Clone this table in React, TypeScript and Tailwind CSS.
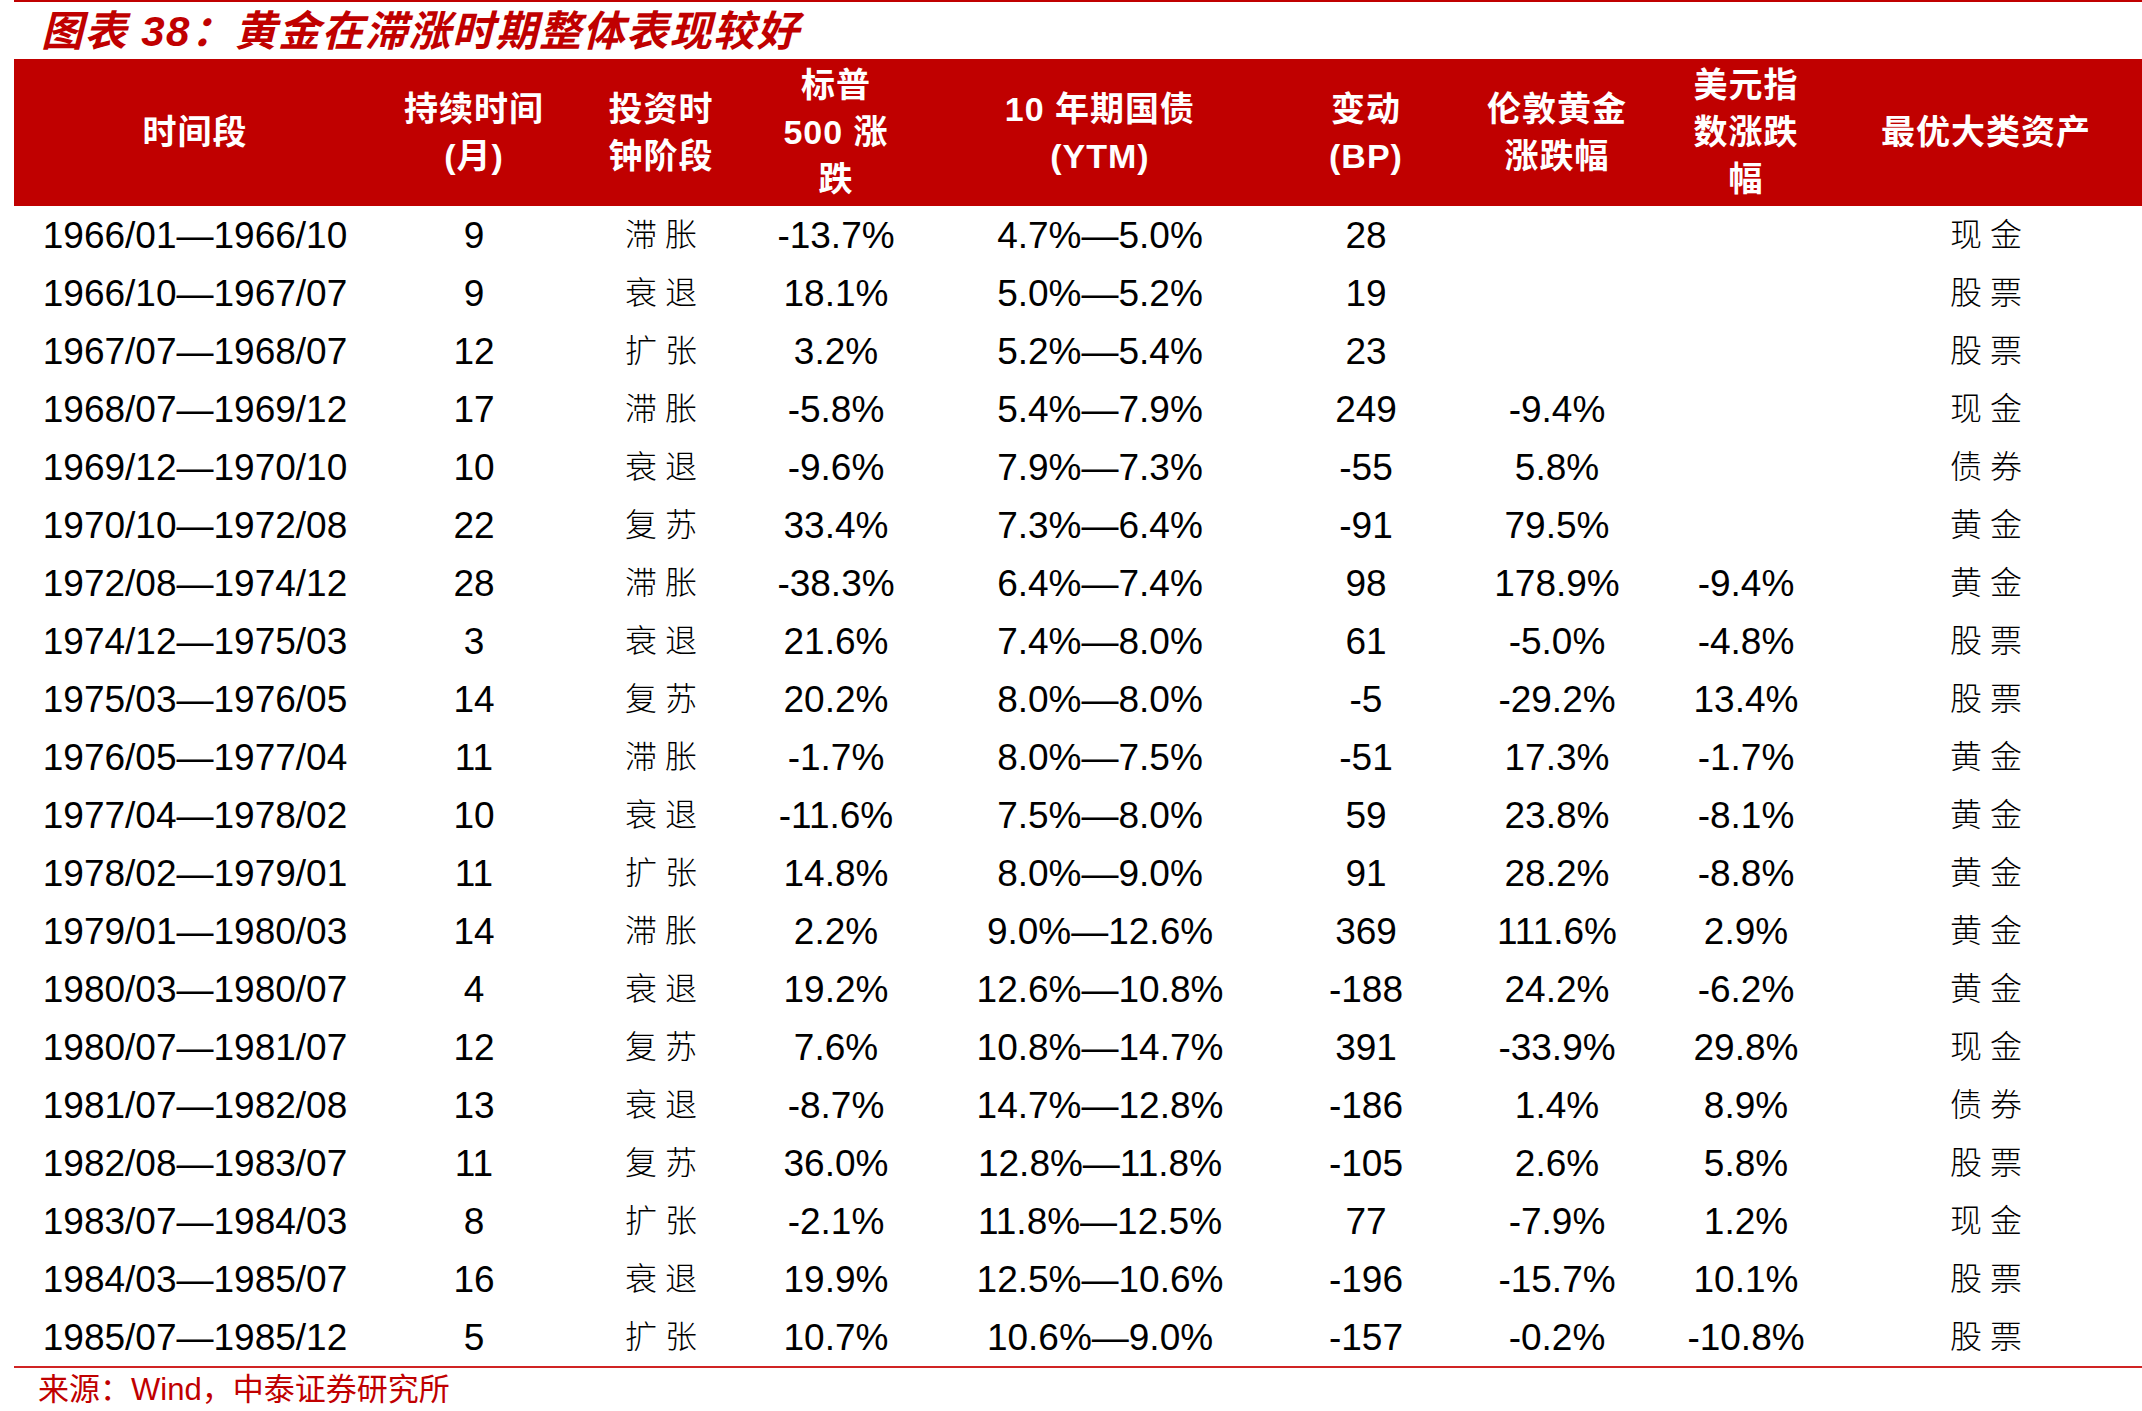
const rows: string[][] = [
  ["1966/01—1966/10", "9", "滞胀", "-13.7%", "4.7%—5.0%", "28", "", "", "现金"],
  ["1966/10—1967/07", "9", "衰退", "18.1%", "5.0%—5.2%", "19", "", "", "股票"],
  ["1967/07—1968/07", "12", "扩张", "3.2%", "5.2%—5.4%", "23", "", "", "股票"],
  ["1968/07—1969/12", "17", "滞胀", "-5.8%", "5.4%—7.9%", "249", "-9.4%", "", "现金"],
  ["1969/12—1970/10", "10", "衰退", "-9.6%", "7.9%—7.3%", "-55", "5.8%", "", "债券"],
  ["1970/10—1972/08", "22", "复苏", "33.4%", "7.3%—6.4%", "-91", "79.5%", "", "黄金"],
  ["1972/08—1974/12", "28", "滞胀", "-38.3%", "6.4%—7.4%", "98", "178.9%", "-9.4%", "黄金"],
  ["1974/12—1975/03", "3", "衰退", "21.6%", "7.4%—8.0%", "61", "-5.0%", "-4.8%", "股票"],
  ["1975/03—1976/05", "14", "复苏", "20.2%", "8.0%—8.0%", "-5", "-29.2%", "13.4%", "股票"],
  ["1976/05—1977/04", "11", "滞胀", "-1.7%", "8.0%—7.5%", "-51", "17.3%", "-1.7%", "黄金"],
  ["1977/04—1978/02", "10", "衰退", "-11.6%", "7.5%—8.0%", "59", "23.8%", "-8.1%", "黄金"],
  ["1978/02—1979/01", "11", "扩张", "14.8%", "8.0%—9.0%", "91", "28.2%", "-8.8%", "黄金"],
  ["1979/01—1980/03", "14", "滞胀", "2.2%", "9.0%—12.6%", "369", "111.6%", "2.9%", "黄金"],
  ["1980/03—1980/07", "4", "衰退", "19.2%", "12.6%—10.8%", "-188", "24.2%", "-6.2%", "黄金"],
  ["1980/07—1981/07", "12", "复苏", "7.6%", "10.8%—14.7%", "391", "-33.9%", "29.8%", "现金"],
  ["1981/07—1982/08", "13", "衰退", "-8.7%", "14.7%—12.8%", "-186", "1.4%", "8.9%", "债券"],
  ["1982/08—1983/07", "11", "复苏", "36.0%", "12.8%—11.8%", "-105", "2.6%", "5.8%", "股票"],
  ["1983/07—1984/03", "8", "扩张", "-2.1%", "11.8%—12.5%", "77", "-7.9%", "1.2%", "现金"],
  ["1984/03—1985/07", "16", "衰退", "19.9%", "12.5%—10.6%", "-196", "-15.7%", "10.1%", "股票"],
  ["1985/07—1985/12", "5", "扩张", "10.7%", "10.6%—9.0%", "-157", "-0.2%", "-10.8%", "股票"],
];

const headers: string[][] = [
  ["时间段"],
  ["持续时间", "(月)"],
  ["投资时", "钟阶段"],
  ["标普", "500 涨", "跌"],
  ["10 年期国债", "(YTM)"],
  ["变动", "(BP)"],
  ["伦敦黄金", "涨跌幅"],
  ["美元指", "数涨跌", "幅"],
  ["最优大类资产"],
];

const grid =
  "grid grid-cols-[362px_196px_178px_172px_356px_176px_206px_172px_308px]";

const cjkCols = [2, 8];

export default function App() {
  return (
    <div className="w-[2142px] h-[1411px] bg-white pl-[14px] overflow-hidden">
      {/* title */}
      <div className="border-t-2 border-[#c00000] h-[59px] flex items-center pl-[27px] pt-[2px]">
        <h1 className="text-[42px] leading-none font-bold italic text-[#c00000] tracking-[1.5px] [font-family:'Liberation_Sans','Noto_Sans_CJK_SC',sans-serif]">
          图表 38：黄金在滞涨时期整体表现较好
        </h1>
      </div>

      {/* header band */}
      <div className={`${grid} h-[147px] bg-[#c00000] text-white font-bold text-[34px] leading-[47px] [font-family:'Liberation_Sans','Noto_Sans_CJK_SC',sans-serif]`}>
        {headers.map((lines, i) => (
          <div key={i} className="flex flex-col items-center justify-center text-center">
            {lines.map((l) => (
              <span key={l} className="tracking-[1px]">
                {l}
              </span>
            ))}
          </div>
        ))}
      </div>

      {/* body */}
      <div className="text-black [font-family:'Liberation_Sans','Noto_Sans_CJK_SC',sans-serif]">
        {rows.map((r, ri) => (
          <div key={ri} className={`${grid} h-[58px] items-center`}>
            {r.map((c, ci) =>
              cjkCols.includes(ci) ? (
                <div key={ci} className="text-center text-[32px] font-light leading-none tracking-[8px] pl-[8px]">
                  {c}
                </div>
              ) : (
                <div key={ci} className="text-center text-[37px] leading-none">
                  {c}
                </div>
              )
            )}
          </div>
        ))}
      </div>

      <div className="h-[2px] bg-[#d02424]" />

      <div className="mt-[7px] pl-[24px] text-[31px] leading-[30px] text-[#c00000] [font-family:'Liberation_Sans','Noto_Sans_CJK_SC',sans-serif]">
        来源：Wind，中泰证券研究所
      </div>
    </div>
  );
}
